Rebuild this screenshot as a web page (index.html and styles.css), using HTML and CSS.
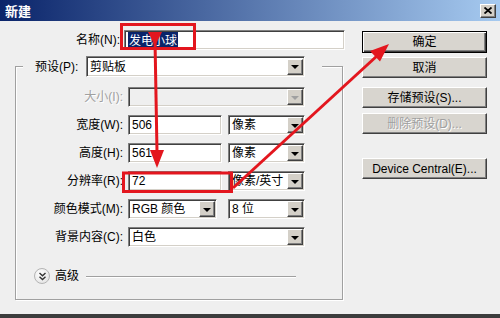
FILE: index.html
```html
<!DOCTYPE html>
<html lang="zh">

<head>
    <meta charset="UTF-8">
    <title>新建</title>
    <link rel="stylesheet" href="styles.css">
</head>

<body>
    <div class="dialog">
        <div class="titlebar">
            <span class="title">新建</span>
            <span class="close">
                <svg width="8" height="7" viewBox="0 0 8 7"><path d="M0.5 0.5L7.5 6.5M7.5 0.5L0.5 6.5" stroke="#000" stroke-width="1.8"/></svg>
            </span>
        </div>
        <div class="main">
            <div class="form">
                <div class="name-row">
                    <span class="label">名称(N):</span>
                    <div class="field"><span class="sel">发电小球</span></div>
                </div>
                <div class="group">
                    <div class="preset">
                        <span class="preset-label">预设(P):</span>
                        <div class="combo preset-combo">剪贴板<span class="drop"></span></div>
                    </div>
                    <div class="rows">
                        <span class="label disabled">大小(I):</span>
                        <div class="ctl"><div class="combo off full"><span class="drop"></span></div></div>

                        <span class="label">宽度(W):</span>
                        <div class="ctl">
                            <div class="field num">506</div>
                            <div class="combo unit">像素<span class="drop"></span></div>
                        </div>

                        <span class="label">高度(H):</span>
                        <div class="ctl">
                            <div class="field num">561</div>
                            <div class="combo unit">像素<span class="drop"></span></div>
                        </div>

                        <span class="label">分辨率(R):</span>
                        <div class="ctl">
                            <div class="field num">72</div>
                            <div class="combo unit">像素/英寸<span class="drop"></span></div>
                        </div>

                        <span class="label">颜色模式(M):</span>
                        <div class="ctl">
                            <div class="combo mode">RGB 颜色<span class="drop"></span></div>
                            <div class="combo unit">8 位<span class="drop"></span></div>
                        </div>

                        <span class="label">背景内容(C):</span>
                        <div class="ctl"><div class="combo full">白色<span class="drop"></span></div></div>
                    </div>
                    <div class="advanced">
                        <span class="expand">
                            <svg width="9" height="9" viewBox="0 0 9 9"><path d="M1.5 1l3 2.8 3-2.8M1.5 4.8l3 2.8 3-2.8" fill="none" stroke="#333" stroke-width="1.4"/></svg>
                        </span>
                        <span>高级</span>
                        <span class="rule"></span>
                    </div>
                </div>
            </div>
            <div class="buttons">
                <div class="btn default">确定</div>
                <div class="btn cancel">取消</div>
                <div class="btn save">存储预设(S)...</div>
                <div class="btn delete disabled">删除预设(D)...</div>
                <div class="btn device">Device Central(E)...</div>
            </div>
        </div>

        <!-- red annotations drawn over the dialog -->
        <svg class="marks" width="500" height="318" viewBox="0 0 500 318">
            <g fill="none" stroke="#e3161e" stroke-width="3">
                <rect x="121.5" y="24.5" width="73" height="24"/>
                <rect x="123.5" y="173" width="108" height="18.5"/>
                <path d="M155 40L157 152"/>
                <path d="M233 188L378 55"/>
            </g>
            <g fill="#e3161e">
                <path d="M148 32H162L155 46Z"/>
                <path d="M150 150H164L157 168Z"/>
                <path d="M389 44L380 61.5L370 51Z"/>
            </g>
        </svg>
    </div>
</body>

</html>
```

FILE: styles.css
```css
* {
    margin: 0;
    padding: 0;
    box-sizing: border-box;
}

body {
    width: 500px;
    height: 318px;
    overflow: hidden;
    font-family: "Liberation Sans", "Noto Sans CJK SC", sans-serif;
    font-size: 12px;
    line-height: 16px;
    color: #000;
    background: #3c3c3c;
}

.dialog {
    position: relative;
    width: 500px;
    height: 314px;
    background: #efefef;
    display: flex;
    flex-direction: column;
}

/* title bar */
.titlebar {
    height: 21px;
    flex: none;
    background: linear-gradient(to right, #0a246a, #a6caf0);
    display: flex;
    align-items: center;
    justify-content: space-between;
    padding: 0 4px 0 5px;
}

.title {
    color: #fff;
    font-family: "Noto Sans CJK SC", sans-serif;
    font-weight: bold;
    font-size: 13px;
}

.close {
    width: 16px;
    height: 14px;
    background: #d4d0c8;
    border: 1px solid;
    border-color: #fff #404040 #404040 #fff;
    box-shadow: inset -1px -1px #808080;
    display: flex;
    align-items: center;
    justify-content: center;
}

.main {
    display: flex;
    flex: 1;
}

/* left form */
.form {
    width: 345px;
    padding: 9px 0 0 15px;
}

.name-row {
    display: flex;
    align-items: center;
    gap: 4px;
    height: 20px;
}

.label {
    text-align: right;
    white-space: nowrap;
}

.name-row .label {
    width: 105px;
}

.label.disabled {
    color: #a0a0a0;
    text-shadow: 1px 1px #fff;
}

.field {
    height: 20px;
    background: #fff;
    border: 1px solid;
    border-color: #808080 #fff #fff #808080;
    box-shadow: inset 1px 1px #404040, inset -1px -1px #d4d0c8;
    padding: 0 3px;
    display: flex;
    align-items: center;
}

.name-row .field {
    width: 221px;
}

.sel {
    background: #0a246a;
    color: #fff;
    padding: 0 1px;
    font-family: "Noto Sans CJK SC", sans-serif;
}

.field.num {
    width: 94px;
}

.combo {
    height: 20px;
    background: #fff;
    border: 1px solid;
    border-color: #808080 #fff #fff #808080;
    box-shadow: inset 1px 1px #404040, inset -1px -1px #d4d0c8;
    padding-left: 3px;
    display: flex;
    align-items: center;
    white-space: nowrap;
}

.combo .drop {
    margin-left: auto;
    margin-right: 1px;
    width: 16px;
    height: 16px;
    flex: none;
    background: #d4d0c8;
    border: 1px solid;
    border-color: #fff #404040 #404040 #fff;
    box-shadow: inset -1px -1px #808080;
    display: flex;
    align-items: center;
    justify-content: center;
}

.combo .drop::after {
    content: "";
    border-left: 4px solid transparent;
    border-right: 4px solid transparent;
    border-top: 4px solid #000;
    margin-top: 1px;
}

.combo.off {
    background: #efefef;
}

.combo.off .drop::after {
    border-top-color: #a0a0a0;
}

.combo.full {
    width: 177px;
}

.combo.unit {
    width: 77px;
}

.combo.mode {
    width: 89px;
}

/* group box */
.group {
    margin-top: 16px;
    width: 328px;
    border: 1px solid #a0a0a0;
    box-shadow: inset 1px 1px #fff, 1px 1px #fff;
    padding: 0 0 15px 1px;
}

.preset {
    display: flex;
    align-items: center;
    width: 299px;
    height: 21px;
    margin: -11px 0 0 6px;
    padding-left: 12px;
    background: #efefef;
}

.preset-label {
    width: 51px;
}

.preset-combo {
    width: 219px;
    height: 21px;
}

.rows {
    display: grid;
    grid-template-columns: 106px 177px;
    grid-auto-rows: 20px;
    column-gap: 5px;
    row-gap: 8px;
    margin-top: 10px;
    align-items: center;
}

.ctl {
    display: flex;
    justify-content: space-between;
}

.advanced {
    display: flex;
    align-items: center;
    height: 16px;
    margin-top: 21px;
    padding-left: 17px;
    gap: 5px;
}

.expand {
    width: 16px;
    height: 16px;
    border: 1px solid #b4b4b4;
    border-radius: 50%;
    background: radial-gradient(circle at 40% 35%, #fff, #dedede);
    display: flex;
    align-items: center;
    justify-content: center;
}

.rule {
    width: 210px;
    height: 1px;
    margin-left: 2px;
    background: #a0a0a0;
    box-shadow: 0 1px #fff;
}

/* right buttons */
.buttons {
    width: 125px;
    margin-left: 17px;
    padding-top: 10px;
    display: flex;
    flex-direction: column;
}

.btn {
    height: 21px;
    background: #d8d5cf;
    border: 1px solid;
    border-color: #fff #404040 #404040 #fff;
    box-shadow: inset -1px -1px #808080;
    display: flex;
    align-items: center;
    justify-content: center;
    white-space: nowrap;
}

.btn.default {
    height: 22px;
    border: 1px solid #000;
    box-shadow: inset 1px 1px #fff, inset -1px -1px #404040, inset -2px -2px #808080;
}

.btn.cancel {
    margin-top: 4px;
}

.btn.save {
    margin-top: 9px;
}

.btn.delete {
    margin-top: 5px;
}

.btn.disabled {
    color: #a0a0a0;
    text-shadow: 1px 1px #fff;
}

.btn.device {
    margin-top: 24px;
}

.marks {
    position: absolute;
    left: 0;
    top: 0;
    pointer-events: none;
}
```
